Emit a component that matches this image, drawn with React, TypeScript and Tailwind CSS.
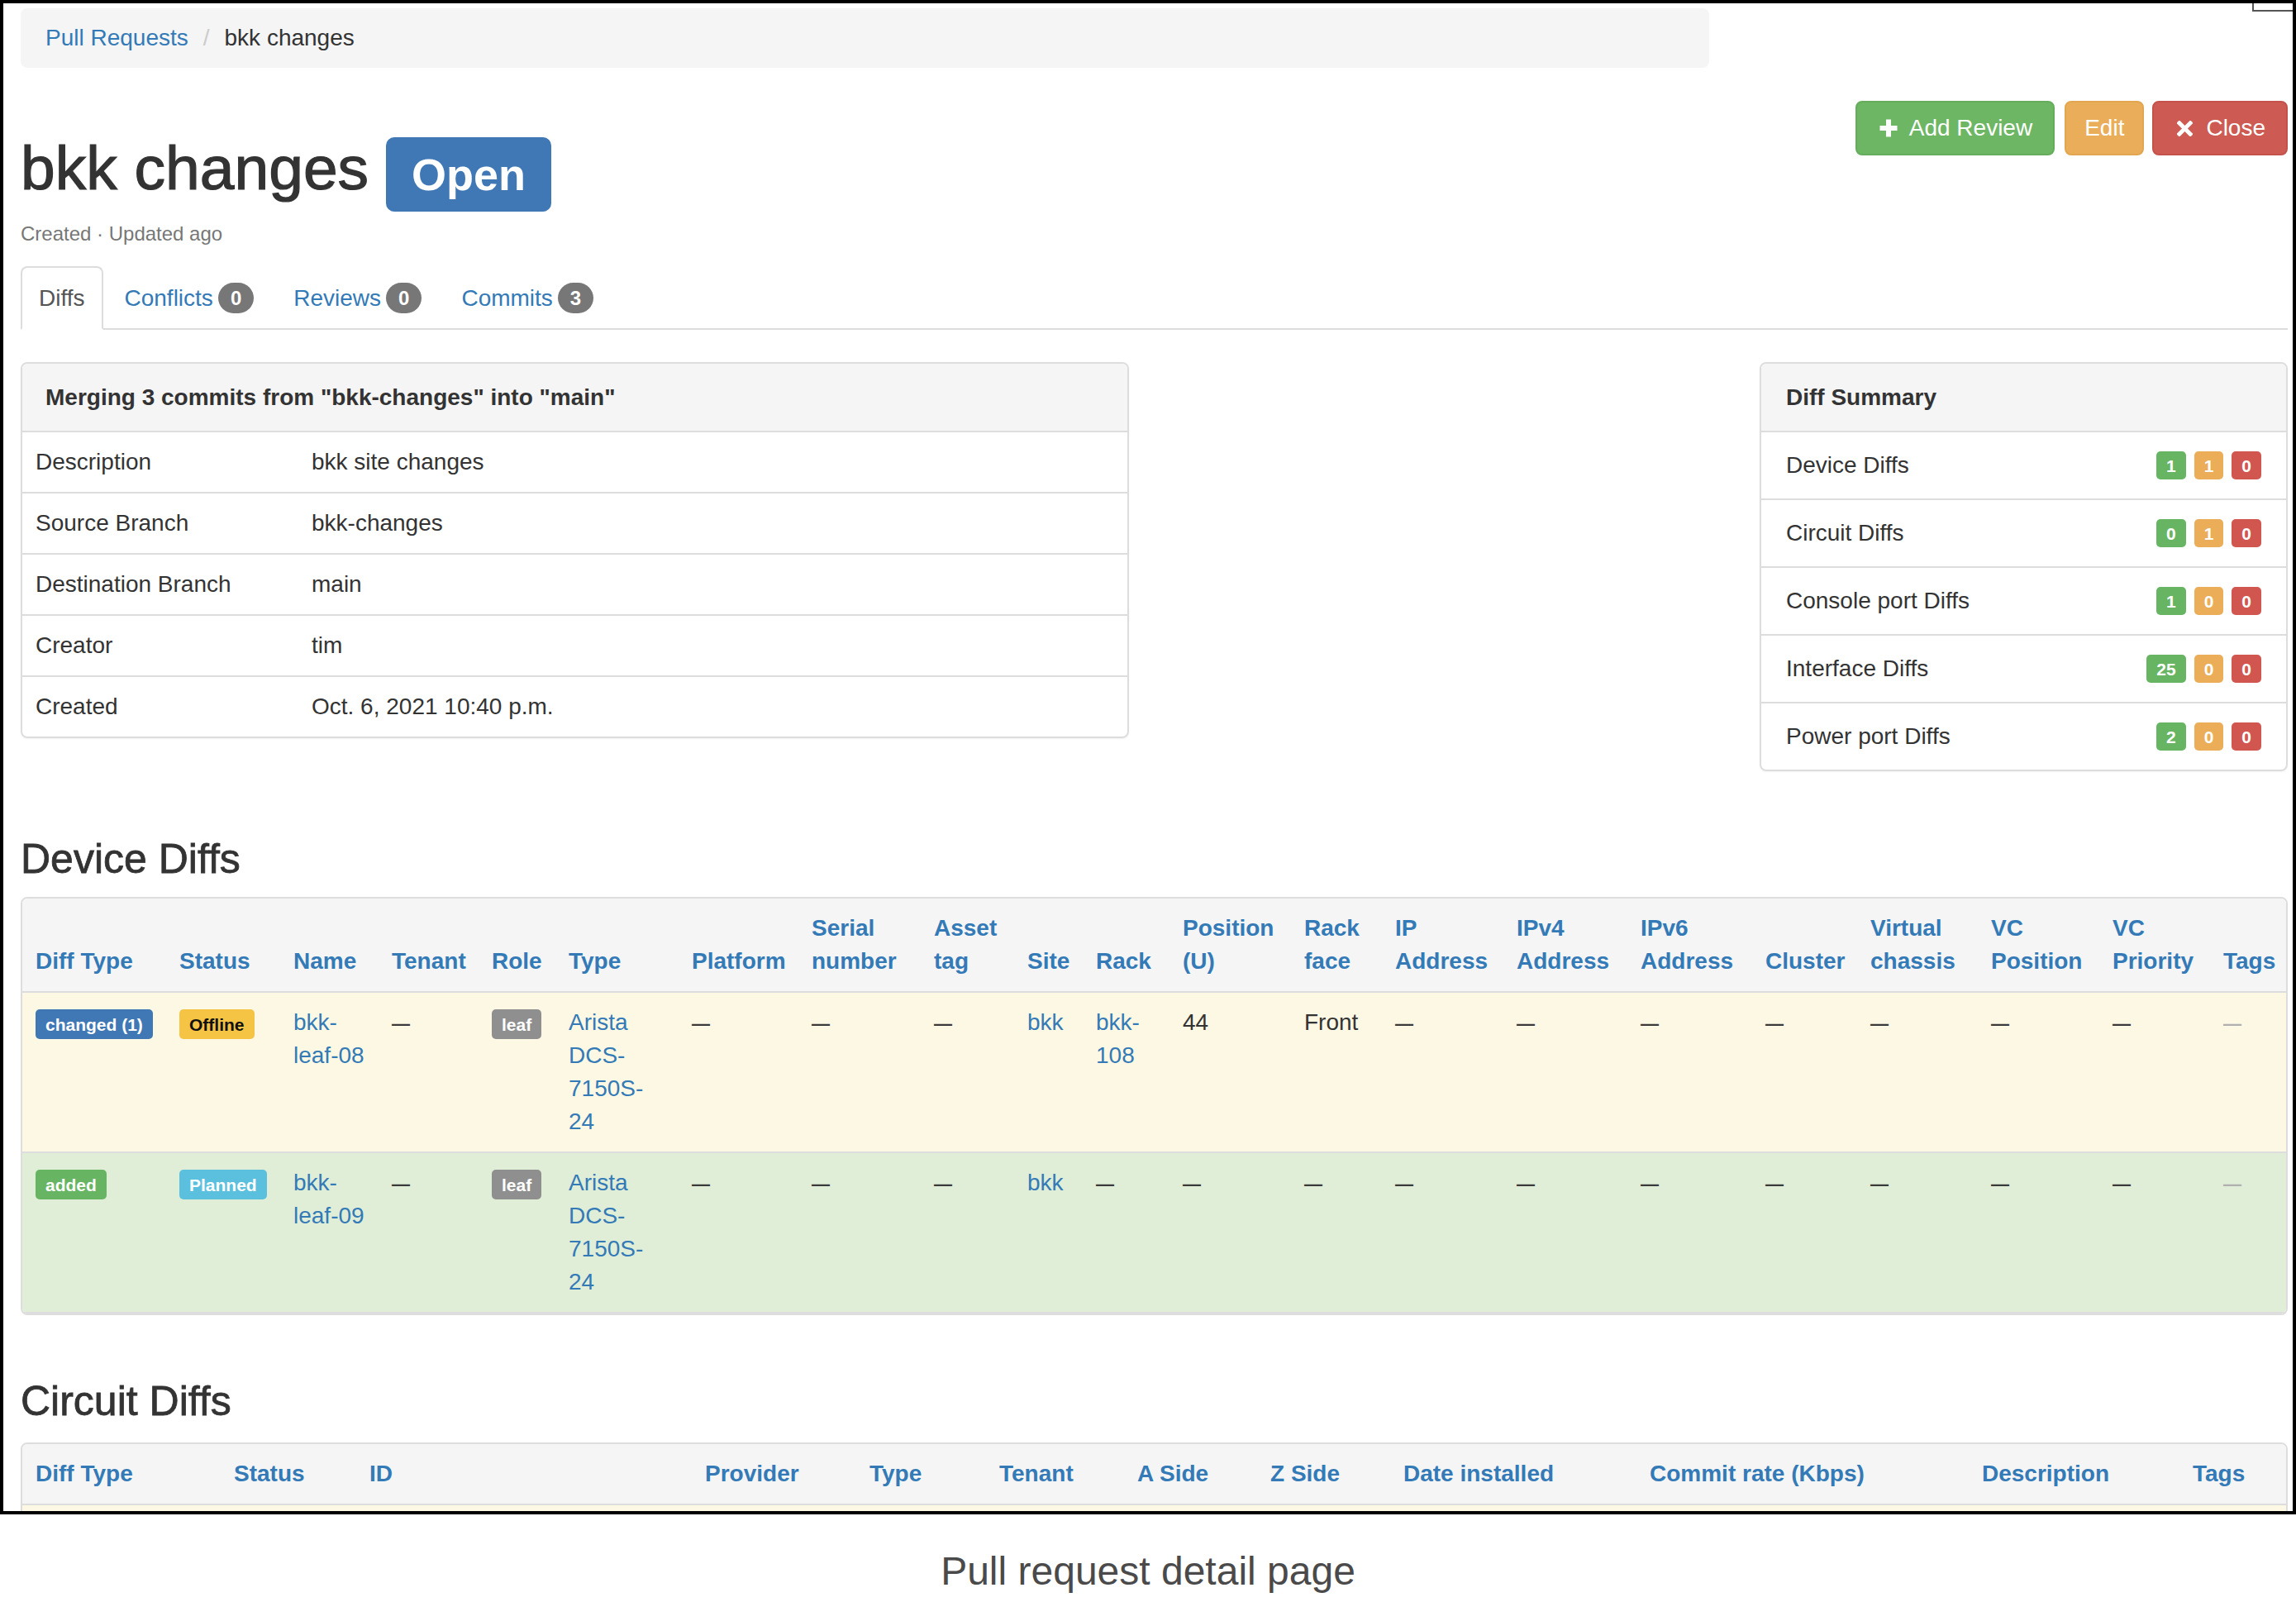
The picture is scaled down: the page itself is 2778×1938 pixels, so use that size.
import React from "react";

const LINK = "text-[#337ab7]";
const TH =
  "px-[16px] py-[16px] align-bottom text-left leading-[40px] text-[28px] font-bold text-[#337ab7] border-b-2 border-[#ddd]";
const TD = "px-[16px] py-[16px] align-top text-left leading-[40px] text-[28px] border-b-2 border-[#ddd]";

function Label({ children, className }: { children: React.ReactNode; className: string }) {
  return (
    <span
      className={
        "inline-flex items-center justify-center h-[36px] px-[12px] rounded-[5px] text-[21px] font-bold leading-none align-top mt-[4px] " +
        className
      }
    >
      {children}
    </span>
  );
}

function Dash({ light }: { light?: boolean }) {
  return (
    <span className={light ? "text-[22px] font-bold text-[#b0b0b0]" : "text-[22px] font-bold text-[#3a3a3a]"}>—</span>
  );
}

function CountBadges({ a, b, c }: { a: string; b: string; c: string }) {
  const base =
    "inline-flex items-center justify-center h-[34px] px-[12px] rounded-[5px] text-[21px] font-bold leading-none text-white";
  return (
    <div className="flex gap-[10px]">
      <span className={base + " bg-[#67b562]"}>{a}</span>
      <span className={base + " bg-[#ebad57]"}>{b}</span>
      <span className={base + " bg-[#d1564f]"}>{c}</span>
    </div>
  );
}

function PlusIcon() {
  return (
    <svg width="24" height="24" viewBox="0 0 24 24" aria-hidden="true">
      <path d="M9 1.5h6v7.5h7.5v6H15v7.5H9V15H1.5V9H9z" fill="white" />
    </svg>
  );
}

function XIcon() {
  return (
    <svg width="19" height="19" viewBox="0 0 20 20" aria-hidden="true">
      <path d="M3 3L17 17M17 3L3 17" stroke="white" strokeWidth="5.2" strokeLinecap="square" />
    </svg>
  );
}

function Tab({ label, count, active }: { label: string; count?: string; active?: boolean }) {
  return (
    <div
      className={
        active
          ? "-mb-[2px] mr-[4px] h-[77px] px-[20px] flex items-center border-2 border-[#ddd] border-b-white bg-white rounded-t-[8px] text-[28px] text-[#555]"
          : "-mb-[2px] mr-[4px] h-[77px] px-[20px] flex items-center border-2 border-transparent rounded-t-[8px] text-[28px] text-[#337ab7]"
      }
    >
      <span>{label}</span>
      {count !== undefined && (
        <span className="ml-[6px] inline-flex items-center justify-center h-[37px] px-[15px] rounded-full bg-[#777] text-white text-[24px] font-bold leading-none">
          {count}
        </span>
      )}
    </div>
  );
}

function InfoRow({ label, value, first }: { label: string; value: string; first?: boolean }) {
  return (
    <div className={first ? "flex items-center h-[72px] text-[28px]" : "flex items-center h-[74px] border-t-2 border-[#ddd] text-[28px]"}>
      <div className="w-[334px] pl-[16px]">{label}</div>
      <div className="pl-[16px]">{value}</div>
    </div>
  );
}

function SummaryRow({ label, a, b, c, first }: { label: string; a: string; b: string; c: string; first?: boolean }) {
  return (
    <div
      className={
        first
          ? "flex items-center justify-between h-[80px] px-[30px] text-[28px]"
          : "flex items-center justify-between h-[82px] px-[30px] border-t-2 border-[#ddd] text-[28px]"
      }
    >
      <span>{label}</span>
      <CountBadges a={a} b={b} c={c} />
    </div>
  );
}

export default function App() {
  return (
    <div className="w-[2778px] h-[1938px] bg-white font-['Liberation_Sans',Arial,sans-serif] text-[#333] flex flex-col">
      <div className="h-[1832px] border-4 border-black overflow-hidden relative shrink-0">
        <div className="absolute top-0 right-0 w-[49px] h-[10px] border-l-2 border-b-2 border-[#555]" />
        <div className="pl-[21px] pr-[6px] pt-[6px]">
          {/* Breadcrumb */}
          <div className="w-[2043px] h-[72px] bg-[#f5f5f5] rounded-[8px] flex items-center px-[30px] text-[28px]">
            <span className={LINK}>Pull Requests</span>
            <span className="ml-[18px] mr-[18px] text-[#ccc]">/</span>
            <span className="text-[#333]">bkk changes</span>
          </div>

          {/* Title row */}
          <div className="flex justify-between items-start">
            <div>
              <div className="mt-[84px] flex items-start">
                <span className="text-[75px] leading-[75px] text-[#333] [-webkit-text-stroke:1.2px_#333]">bkk changes</span>
                <span className="ml-[21px] w-[200px] h-[90px] bg-[#3f78b5] rounded-[10px] flex items-center justify-center text-white font-bold text-[54px] leading-none">
                  Open
                </span>
              </div>
              <div className="mt-[10px] text-[24px] leading-[34px] text-[#777]">Created · Updated ago</div>
            </div>
            <div className="mt-[40px] flex items-center">
              <div className="h-[66px] pl-[26px] pr-[25px] rounded-[8px] bg-[#6db664] border-2 border-[#65ad5c] flex items-center text-white text-[28px]">
                <PlusIcon />
                <span className="ml-[13px]">Add Review</span>
              </div>
              <div className="ml-[12px] h-[66px] px-[22px] rounded-[8px] bg-[#eaae5a] border-2 border-[#e3a650] flex items-center text-white text-[28px]">
                Edit
              </div>
              <div className="ml-[10px] h-[66px] pl-[28px] pr-[25px] rounded-[8px] bg-[#cd5b53] border-2 border-[#c4524a] flex items-center text-white text-[28px]">
                <XIcon />
                <span className="ml-[16px]">Close</span>
              </div>
            </div>
          </div>

          {/* Tabs */}
          <div className="mt-[22px] flex border-b-2 border-[#ddd]">
            <Tab label="Diffs" active />
            <Tab label="Conflicts" count="0" />
            <Tab label="Reviews" count="0" />
            <Tab label="Commits" count="3" />
          </div>

          {/* Panels */}
          <div className="mt-[39px] flex justify-between items-start">
            <div className="w-[1341px] border-2 border-[#ddd] rounded-[8px] overflow-hidden shadow-[0_1px_2px_rgba(0,0,0,0.05)]">
              <div className="h-[83px] bg-[#f5f5f5] border-b-2 border-[#ddd] px-[28px] flex items-center font-bold text-[28px]">
                Merging 3 commits from "bkk-changes" into "main"
              </div>
              <InfoRow label="Description" value="bkk site changes" first />
              <InfoRow label="Source Branch" value="bkk-changes" />
              <InfoRow label="Destination Branch" value="main" />
              <InfoRow label="Creator" value="tim" />
              <InfoRow label="Created" value="Oct. 6, 2021 10:40 p.m." />
            </div>
            <div className="w-[639px] border-2 border-[#ddd] rounded-[8px] overflow-hidden shadow-[0_1px_2px_rgba(0,0,0,0.05)]">
              <div className="h-[83px] bg-[#f5f5f5] border-b-2 border-[#ddd] px-[30px] flex items-center font-bold text-[28px]">
                Diff Summary
              </div>
              <SummaryRow label="Device Diffs" a="1" b="1" c="0" first />
              <SummaryRow label="Circuit Diffs" a="0" b="1" c="0" />
              <SummaryRow label="Console port Diffs" a="1" b="0" c="0" />
              <SummaryRow label="Interface Diffs" a="25" b="0" c="0" />
              <SummaryRow label="Power port Diffs" a="2" b="0" c="0" />
            </div>
          </div>

          {/* Device Diffs */}
          <div className="mt-[80px] text-[50px] leading-[53px] text-[#333] [-webkit-text-stroke:0.8px_#333]">Device Diffs</div>
          <div className="mt-[19px] border-2 border-[#ddd] rounded-[8px] overflow-hidden">
            <table className="w-full table-fixed border-collapse">
              <colgroup>
                <col className="w-[174px]" />
                <col className="w-[138px]" />
                <col className="w-[119px]" />
                <col className="w-[121px]" />
                <col className="w-[93px]" />
                <col className="w-[149px]" />
                <col className="w-[145px]" />
                <col className="w-[148px]" />
                <col className="w-[113px]" />
                <col className="w-[83px]" />
                <col className="w-[105px]" />
                <col className="w-[147px]" />
                <col className="w-[110px]" />
                <col className="w-[147px]" />
                <col className="w-[150px]" />
                <col className="w-[151px]" />
                <col className="w-[127px]" />
                <col className="w-[146px]" />
                <col className="w-[147px]" />
                <col className="w-[134px]" />
                <col />
              </colgroup>
              <thead>
                <tr className="bg-[#f5f5f5]">
                  <th className={TH}>Diff Type</th>
                  <th className={TH}>Status</th>
                  <th className={TH}>Name</th>
                  <th className={TH}>Tenant</th>
                  <th className={TH}>Role</th>
                  <th className={TH}>Type</th>
                  <th className={TH}>Platform</th>
                  <th className={TH}>Serial number</th>
                  <th className={TH}>Asset tag</th>
                  <th className={TH}>Site</th>
                  <th className={TH}>Rack</th>
                  <th className={TH}>Position (U)</th>
                  <th className={TH}>Rack face</th>
                  <th className={TH}>IP Address</th>
                  <th className={TH}>IPv4 Address</th>
                  <th className={TH}>IPv6 Address</th>
                  <th className={TH}>Cluster</th>
                  <th className={TH}>Virtual chassis</th>
                  <th className={TH}>VC Position</th>
                  <th className={TH}>VC Priority</th>
                  <th className={TH}>Tags</th>
                </tr>
              </thead>
              <tbody>
                <tr className="bg-[#fcf8e3]">
                  <td className={TD}>
                    <Label className="bg-[#3f78b5] text-white">changed (1)</Label>
                  </td>
                  <td className={TD}>
                    <Label className="bg-[#f6c445] text-[#111]">Offline</Label>
                  </td>
                  <td className={TD + " text-[#337ab7]"}>bkk-leaf-08</td>
                  <td className={TD}><Dash /></td>
                  <td className={TD}>
                    <Label className="bg-[#8f8f8f] text-white">leaf</Label>
                  </td>
                  <td className={TD + " text-[#337ab7]"}>Arista DCS-7150S-24</td>
                  <td className={TD}><Dash /></td>
                  <td className={TD}><Dash /></td>
                  <td className={TD}><Dash /></td>
                  <td className={TD + " text-[#337ab7]"}>bkk</td>
                  <td className={TD + " text-[#337ab7]"}>bkk-108</td>
                  <td className={TD}>44</td>
                  <td className={TD}>Front</td>
                  <td className={TD}><Dash /></td>
                  <td className={TD}><Dash /></td>
                  <td className={TD}><Dash /></td>
                  <td className={TD}><Dash /></td>
                  <td className={TD}><Dash /></td>
                  <td className={TD}><Dash /></td>
                  <td className={TD}><Dash /></td>
                  <td className={TD}><Dash light /></td>
                </tr>
                <tr className="bg-[#e0eed8]">
                  <td className={TD + " border-b-0"}>
                    <Label className="bg-[#67b562] text-white">added</Label>
                  </td>
                  <td className={TD + " border-b-0"}>
                    <Label className="bg-[#5bc0de] text-white">Planned</Label>
                  </td>
                  <td className={TD + " border-b-0 text-[#337ab7]"}>bkk-leaf-09</td>
                  <td className={TD + " border-b-0"}><Dash /></td>
                  <td className={TD + " border-b-0"}>
                    <Label className="bg-[#8f8f8f] text-white">leaf</Label>
                  </td>
                  <td className={TD + " border-b-0 text-[#337ab7]"}>Arista DCS-7150S-24</td>
                  <td className={TD + " border-b-0"}><Dash /></td>
                  <td className={TD + " border-b-0"}><Dash /></td>
                  <td className={TD + " border-b-0"}><Dash /></td>
                  <td className={TD + " border-b-0 text-[#337ab7]"}>bkk</td>
                  <td className={TD + " border-b-0"}><Dash /></td>
                  <td className={TD + " border-b-0"}><Dash /></td>
                  <td className={TD + " border-b-0"}><Dash /></td>
                  <td className={TD + " border-b-0"}><Dash /></td>
                  <td className={TD + " border-b-0"}><Dash /></td>
                  <td className={TD + " border-b-0"}><Dash /></td>
                  <td className={TD + " border-b-0"}><Dash /></td>
                  <td className={TD + " border-b-0"}><Dash /></td>
                  <td className={TD + " border-b-0"}><Dash /></td>
                  <td className={TD + " border-b-0"}><Dash /></td>
                  <td className={TD + " border-b-0"}><Dash light /></td>
                </tr>
              </tbody>
            </table>
          </div>

          {/* Circuit Diffs */}
          <div className="mt-[78px] text-[50px] leading-[53px] text-[#333] [-webkit-text-stroke:0.8px_#333]">Circuit Diffs</div>
          <div className="mt-[23px] border-2 border-[#ddd] rounded-[8px] overflow-hidden">
            <table className="w-full table-fixed border-collapse">
              <colgroup>
                <col className="w-[240px]" />
                <col className="w-[164px]" />
                <col className="w-[406px]" />
                <col className="w-[199px]" />
                <col className="w-[157px]" />
                <col className="w-[167px]" />
                <col className="w-[161px]" />
                <col className="w-[161px]" />
                <col className="w-[298px]" />
                <col className="w-[402px]" />
                <col className="w-[255px]" />
                <col />
              </colgroup>
              <thead>
                <tr className="bg-[#f5f5f5]">
                  <th className={TH}>Diff Type</th>
                  <th className={TH}>Status</th>
                  <th className={TH}>ID</th>
                  <th className={TH}>Provider</th>
                  <th className={TH}>Type</th>
                  <th className={TH}>Tenant</th>
                  <th className={TH}>A Side</th>
                  <th className={TH}>Z Side</th>
                  <th className={TH}>Date installed</th>
                  <th className={TH}>Commit rate (Kbps)</th>
                  <th className={TH}>Description</th>
                  <th className={TH}>Tags</th>
                </tr>
              </thead>
              <tbody>
                <tr className="bg-[#fcf8e3] h-[72px]">
                  <td colSpan={12} />
                </tr>
              </tbody>
            </table>
          </div>
        </div>
      </div>
      <div className="flex-1 pt-[32px] flex items-center justify-center text-[48px] text-[#4a4a4a]">
        Pull request detail page
      </div>
    </div>
  );
}
